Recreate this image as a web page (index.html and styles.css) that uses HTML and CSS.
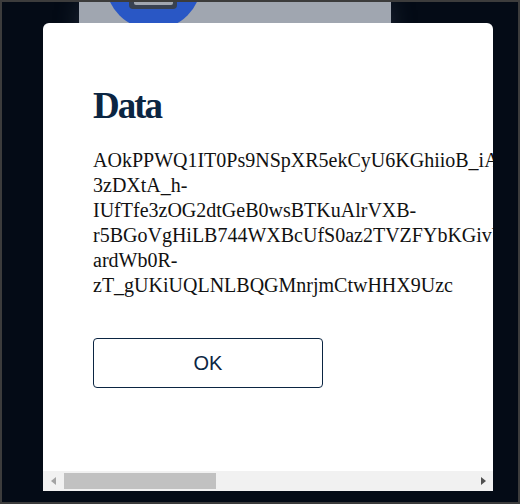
FILE: index.html
```html
<!DOCTYPE html>
<html lang="en">
<head>
  <meta charset="UTF-8">
  <meta name="viewport" content="width=device-width, initial-scale=1.0">
  <title>Data</title>
  <link rel="stylesheet" href="styles.css">
</head>
<body>
  <div class="frame">
    <!-- page behind the dialog -->
    <div class="page-head">
      <svg class="avatar" width="312" height="40" viewBox="0 0 312 40">
        <circle cx="74.5" cy="-20.4" r="48" fill="#2957c5"/>
        <rect x="50" y="-12" width="48" height="19" rx="4" fill="#384151"/>
        <rect x="55" y="-12" width="39" height="15" rx="2" fill="#a0a6b0"/>
      </svg>
    </div>

    <div class="modal">
      <div class="modal-body">
        <h1>Data</h1>
        <p class="token">AOkPPWQ1IT0Ps9NSpXR5ekCyU6KGhiioB_iAq7Lm2VxN0cRt8WfJd4YsKe1HbPuGzO9hTnA5jQwXi3oMlEv6rSyFgD0kUaZp7CbN2xLt-3zDXtA_h-IUfTfe3zOG2dtGeB0wsBTKuAlrVXB-r5BGoVgHiLB744WXBcUfS0az2TVZFYbKGivVe8TnLpW3sXmA0dRhJy5Uo2CkZf9Vb7NgIt4Ma1EwPx6SlOq-ardWb0R-zT_gUKiUQLNLBQGMnrjmCtwHHX9Uzc</p>
        <button class="btn-ok">OK</button>
      </div>
      <!-- horizontal scrollbar -->
      <div class="hscroll">
        <div class="hs-btn"><span class="arrow-left"></span></div>
        <div class="hs-track"><div class="hs-thumb"></div></div>
        <div class="hs-btn right"><span class="arrow-right"></span></div>
      </div>
    </div>
  </div>
</body>
</html>
```

FILE: styles.css
```css
/* Reset */
* { margin: 0; padding: 0; box-sizing: border-box; }
body {
  background: #3c3c3c;
}
.frame {
  position: relative;
  height: 100vh;
  border: 2px solid #3c3c3c;
  background: #040b16;
  overflow: hidden;
}
.page-head {
  margin-left: 77px;
  width: 312px;
  height: 80px;
  background: #a0a6b0;
  box-shadow: 0 0 22px rgba(80, 92, 115, 0.35);
  overflow: hidden;
}
.avatar { display: block; }

/* Dialog */
.modal {
  position: absolute;
  top: 21px;
  left: 41px;
  width: 450px;
  height: 468px;
  background: #fff;
  border-radius: 6px 6px 0 0;
  display: flex;
  flex-direction: column;
  overflow: hidden;
}
.modal-body {
  flex: 1;
  overflow: hidden;
  padding: 61px 50px 0;
}
.modal-body h1 {
  font-family: 'Liberation Serif', serif;
  font-size: 37px;
  font-weight: 700;
  letter-spacing: -2px;
  color: #0b2542;
  margin-bottom: 21px;
}
.token {
  font-family: 'Liberation Serif', serif;
  font-size: 20px;
  line-height: 25px;
  color: #111;
}
.btn-ok {
  display: block;
  margin-top: 40px;
  width: 230px;
  height: 50px;
  background: #fff;
  border: 1px solid #0b2542;
  border-radius: 4px;
  font-family: 'Liberation Sans', Arial, sans-serif;
  font-size: 20px;
  color: #0b2542;
  cursor: pointer;
}

/* Scrollbar */
.hscroll {
  display: flex;
  height: 20px;
  background: #f1f1f1;
}
.hs-btn {
  width: 21px;
  display: flex;
  align-items: center;
  justify-content: center;
}
.hs-btn.right { width: 20px; }
.arrow-left {
  border-top: 4.5px solid transparent;
  border-bottom: 4.5px solid transparent;
  border-right: 5px solid #a3a3a3;
}
.arrow-right {
  border-top: 4.5px solid transparent;
  border-bottom: 4.5px solid transparent;
  border-left: 5px solid #505050;
}
.hs-track {
  flex: 1;
  padding: 2px 0;
}
.hs-thumb {
  width: 152px;
  height: 100%;
  background: #c1c1c1;
}
```
